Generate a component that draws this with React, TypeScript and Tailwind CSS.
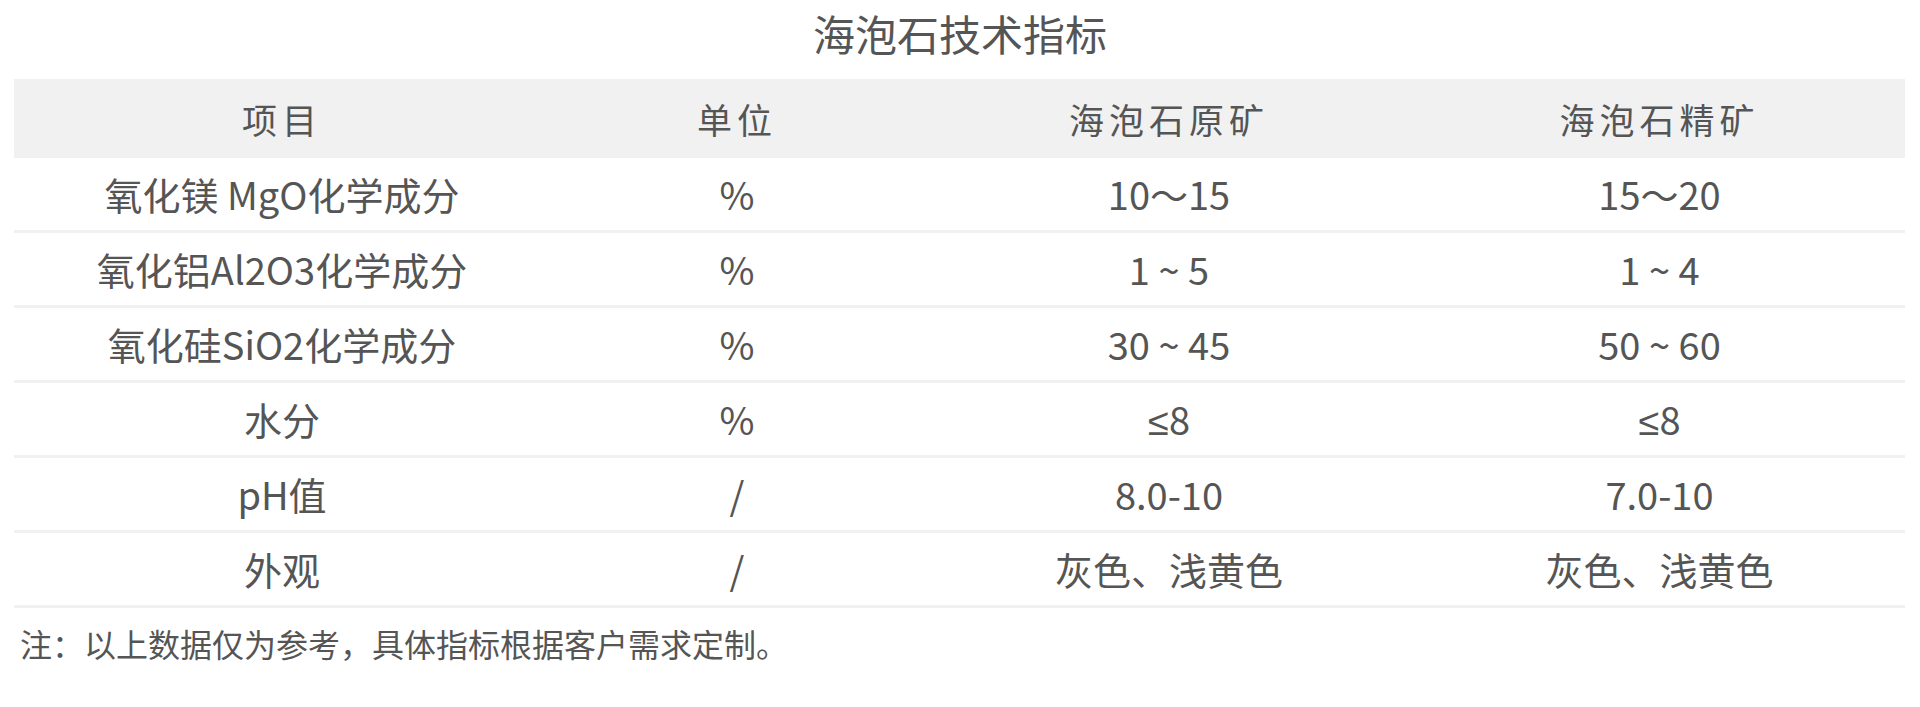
const header = ["项目", "单位", "海泡石原矿", "海泡石精矿"];

const rows = [
  ["氧化镁 MgO化学成分", "%", "10～15", "15～20"],
  ["氧化铝Al2O3化学成分", "%", "1 ~ 5", "1 ~ 4"],
  ["氧化硅SiO2化学成分", "%", "30 ~ 45", "50 ~ 60"],
  ["水分", "%", "≤8", "≤8"],
  ["pH值", "/", "8.0-10", "7.0-10"],
  ["外观", "/", "灰色、浅黄色", "灰色、浅黄色"],
];

function Cell({ text }: { text: string }) {
  // the CJK font draws ≤ slanted; the reference has the flat-bar form
  if (text.startsWith("≤")) {
    return (
      <>
        <span className="font-['Liberation_Sans',sans-serif]">≤</span>
        {text.slice(1)}
      </>
    );
  }
  return <>{text}</>;
}

export default function App() {
  return (
    <div className="min-h-screen w-full bg-white text-[#555] font-['Noto_Sans_CJK_SC','Noto_Sans',sans-serif]">
      <h1 className="h-[79px] text-center text-[42px] leading-[66px] font-normal">海泡石技术指标</h1>

      <div className="ml-[14px] w-[1891px]">
        <div className="grid grid-cols-[536px_374px_490px_491px] bg-[#f1f1f1] h-[79px]">
          {header.map((h) => (
            <div key={h} className="text-center text-[35px] leading-[79px] tracking-[5px]">
              {h}
            </div>
          ))}
        </div>

        {rows.map((r, i) => (
          <div
            key={i}
            className="grid grid-cols-[536px_374px_490px_491px] h-[75px] border-b-[3px] border-[#f1f1f1]"
          >
            {r.map((c, j) => (
              <div key={j} className="text-center text-[38px] leading-[72px] whitespace-nowrap">
                <Cell text={c} />
              </div>
            ))}
          </div>
        ))}
      </div>

      <p className="pl-[20px] h-[70px] text-[32px] leading-[70px]">
        注：以上数据仅为参考，具体指标根据客户需求定制。
      </p>
    </div>
  );
}
